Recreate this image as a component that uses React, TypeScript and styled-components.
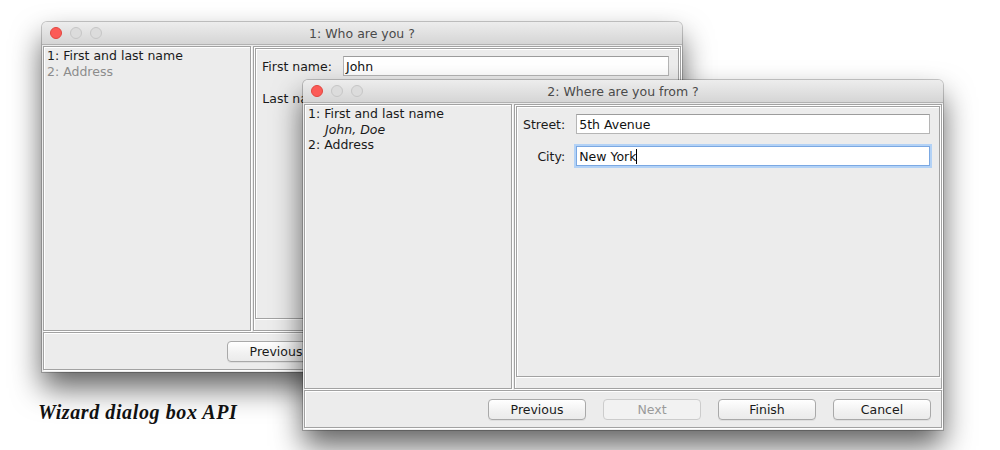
import styled, { createGlobalStyle } from 'styled-components';

const GlobalStyle = createGlobalStyle`
  *, *::before, *::after {
    box-sizing: border-box;
  }
  html, body {
    margin: 0;
    padding: 0;
    background: #ffffff;
  }
  body {
    font-family: 'DejaVu Sans', 'Liberation Sans', sans-serif;
    font-size: 12.5px;
    color: #1a1a1a;
  }
`;

const Desktop = styled.div`
  position: relative;
  width: 1000px;
  height: 450px;
  overflow: hidden;
  background: #ffffff;
`;

// windows sit on a free desktop, so their place is part of the content
const Window = styled.div<{ $left: number; $top: number }>`
  position: absolute;
  left: ${(p) => p.$left}px;
  top: ${(p) => p.$top}px;
  width: 640px;
  height: 350px;
  display: flex;
  flex-direction: column;
  background: #ececec;
  border-radius: 5px 5px 0 0;
  box-shadow: 0 0 0 1px rgba(0, 0, 0, 0.2), 0 16px 30px rgba(0, 0, 0, 0.62);
`;

const TitleBar = styled.div`
  position: relative;
  height: 23px;
  flex: none;
  display: flex;
  align-items: center;
  justify-content: center;
  background: linear-gradient(#ededed, #d5d5d5);
  border-bottom: 1px solid #b1b1b1;
  border-radius: 5px 5px 0 0;
  color: #4a4a4a;
  font-size: 12.5px;
`;

const Lights = styled.div`
  position: absolute;
  left: 8px;
  top: 5px;
  display: flex;
  gap: 8px;
`;

const Light = styled.span<{ $color: string; $edge: string }>`
  width: 12px;
  height: 12px;
  border-radius: 50%;
  background: ${(p) => p.$color};
  border: 1px solid ${(p) => p.$edge};
`;

const Body = styled.div`
  flex: 1;
  display: flex;
  flex-direction: column;
  padding: 1px 1px 2px 1px;
  gap: 1px;
`;

const Split = styled.div`
  flex: 1;
  display: flex;
  gap: 2px;
`;

const Etched = styled.div`
  border: 1px solid #a2a2a2;
  box-shadow: inset 1px 1px 0 #ffffff, 1px 1px 0 #ffffff;
`;

const StepList = styled(Etched)`
  width: 208px;
  flex: none;
  padding: 1px 3px;
  line-height: 15.5px;
`;

const Step = styled.div<{ $dim?: boolean }>`
  color: ${(p) => (p.$dim ? '#8c8c8c' : '#1a1a1a')};
`;

const StepDetail = styled.div`
  padding-left: 17px;
  font-style: italic;
`;

const RightPane = styled(Etched)`
  flex: 1;
  display: flex;
  flex-direction: column;
  padding: 1px;
  gap: 1px;
`;

const FormBox = styled(Etched)`
  flex: 1;
  display: grid;
  grid-template-columns: auto 1fr;
  align-content: start;
  column-gap: 11px;
  row-gap: 12px;
  padding: 7px 9px 0 6px;
`;

const StatusStrip = styled.div`
  height: 9px;
  flex: none;
`;

const FieldLabel = styled.label`
  justify-self: end;
  align-self: center;
`;

const TextField = styled.div<{ $focused?: boolean }>`
  height: 20px;
  display: flex;
  align-items: center;
  padding-left: 2px;
  background: #ffffff;
  border: 1px solid ${(p) => (p.$focused ? '#7ba8e2' : '#b5b5b5')};
  border-top-color: ${(p) => (p.$focused ? '#7ba8e2' : '#9c9c9c')};
  box-shadow: ${(p) => (p.$focused ? '0 0 0 2px #b3d2f6' : 'none')};
  color: #111111;
`;

const Caret = styled.span`
  width: 1px;
  height: 15px;
  background: #000000;
`;

const ButtonBar = styled(Etched)`
  height: 38px;
  flex: none;
  display: flex;
  align-items: center;
  justify-content: flex-end;
  gap: 17px;
  padding-right: 10px;
`;

const PushButton = styled.button<{ $disabled?: boolean }>`
  width: 98px;
  height: 21px;
  padding: 0;
  font: inherit;
  color: ${(p) => (p.$disabled ? '#9a9a9a' : '#1a1a1a')};
  background: ${(p) =>
    p.$disabled ? '#f2f2f2' : 'linear-gradient(#ffffff, #f1f1f1 60%, #ebebeb)'};
  border: 1px solid ${(p) => (p.$disabled ? '#cccccc' : '#a9a9a9')};
  border-radius: 4px;
  box-shadow: ${(p) => (p.$disabled ? 'none' : '0 1px 0 rgba(0,0,0,0.06)')};
`;

const Caption = styled.div`
  position: absolute;
  left: 38px;
  top: 401px;
  font-family: 'Liberation Serif', serif;
  font-weight: bold;
  font-style: italic;
  font-size: 20px;
  letter-spacing: 0.6px;
  color: #111111;
`;

type Field = { label: string; value: string; focused?: boolean };

const WizardWindow = ({
  left,
  top,
  title,
  steps,
  fields,
}: {
  left: number;
  top: number;
  title: string;
  steps: React.ReactNode;
  fields: Field[];
}) => (
  <Window $left={left} $top={top}>
    <TitleBar>
      <Lights>
        <Light $color="#fc5b57" $edge="#e2463f" />
        <Light $color="#dcdcdc" $edge="#c6c6c6" />
        <Light $color="#dcdcdc" $edge="#c6c6c6" />
      </Lights>
      {title}
    </TitleBar>
    <Body>
      <Split>
        <StepList>{steps}</StepList>
        <RightPane>
          <FormBox>
            {fields.map((f) => [
              <FieldLabel key={f.label + '-l'}>{f.label}</FieldLabel>,
              <TextField key={f.label + '-f'} $focused={f.focused}>
                {f.value}
                {f.focused && <Caret />}
              </TextField>,
            ])}
          </FormBox>
          <StatusStrip />
        </RightPane>
      </Split>
      <ButtonBar>
        <PushButton>Previous</PushButton>
        <PushButton $disabled>Next</PushButton>
        <PushButton>Finish</PushButton>
        <PushButton>Cancel</PushButton>
      </ButtonBar>
    </Body>
  </Window>
);

export default function App() {
  return (
    <Desktop>
      <GlobalStyle />
      <WizardWindow
        left={42}
        top={22}
        title="1: Who are you ?"
        steps={
          <>
            <Step>1: First and last name</Step>
            <Step $dim>2: Address</Step>
          </>
        }
        fields={[
          { label: 'First name:', value: 'John' },
          { label: 'Last name:', value: 'Doe' },
        ]}
      />
      <Caption>Wizard dialog box API</Caption>
      <WizardWindow
        left={303}
        top={80}
        title="2: Where are you from ?"
        steps={
          <>
            <Step>1: First and last name</Step>
            <StepDetail>John, Doe</StepDetail>
            <Step>2: Address</Step>
          </>
        }
        fields={[
          { label: 'Street:', value: '5th Avenue' },
          { label: 'City:', value: 'New York', focused: true },
        ]}
      />
    </Desktop>
  );
}
